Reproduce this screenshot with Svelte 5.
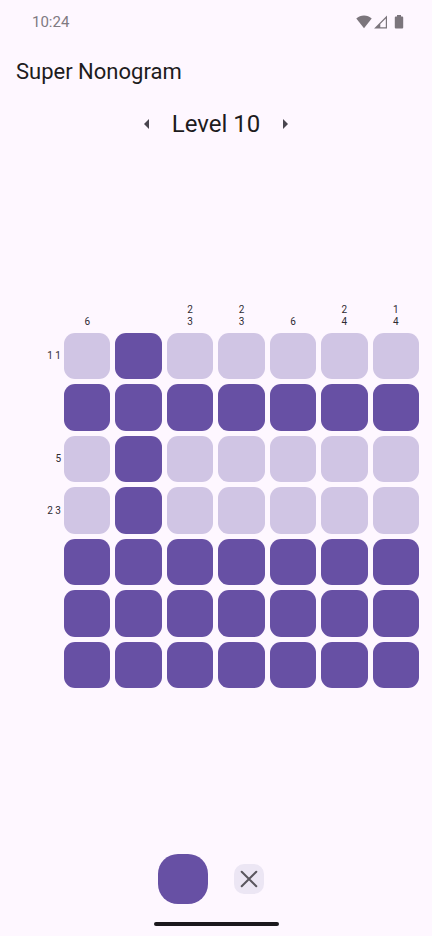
<script>
  const columnClues = [[6], [], [2, 3], [2, 3], [6], [2, 4], [1, 4]];
  const rowClues = [[1, 1], [], [5], [2, 3], [], [], []];

  let level = $state(10);
  let tool = $state('fill');
  let cells = $state([
    [0, 1, 0, 0, 0, 0, 0],
    [1, 1, 1, 1, 1, 1, 1],
    [0, 1, 0, 0, 0, 0, 0],
    [0, 1, 0, 0, 0, 0, 0],
    [1, 1, 1, 1, 1, 1, 1],
    [1, 1, 1, 1, 1, 1, 1],
    [1, 1, 1, 1, 1, 1, 1]
  ]);

  function paint(r, c) {
    cells[r][c] = tool === 'fill' ? 1 - cells[r][c] : 0;
  }
</script>

<div class="screen">
  <div class="status">
    <span>10:24</span>
    <div class="indicators">
      <svg width="16" height="14" viewBox="0 0 16 14" aria-hidden="true">
        <path d="M8 13.3 0.3 3.6C2.4 1.6 5.1 0.6 8 0.6s5.6 1 7.7 3z" />
      </svg>
      <svg width="14" height="14" viewBox="0 0 14 14" aria-hidden="true">
        <path fill-rule="evenodd" d="M13 0.6v12.9H0.1zM11.8 3.6 6.3 9.1v3.2h5.5z" />
      </svg>
      <svg class="battery" width="10" height="14" viewBox="0 0 10 14" aria-hidden="true">
        <path d="M3 0h4v1.4h1.2a1 1 0 0 1 1 1v10a1 1 0 0 1-1 1H1.8a1 1 0 0 1-1-1v-10a1 1 0 0 1 1-1H3z" />
      </svg>
    </div>
  </div>

  <header><h1>Super Nonogram</h1></header>

  <nav class="levels">
    <button class="arrow" aria-label="Previous level" onclick={() => (level -= 1)}>
      <svg width="24" height="24" viewBox="0 0 24 24"><path d="M14 7l-5 5 5 5z" /></svg>
    </button>
    <h2>Level {level}</h2>
    <button class="arrow" aria-label="Next level" onclick={() => (level += 1)}>
      <svg width="24" height="24" viewBox="0 0 24 24"><path d="M10 17l5-5-5-5z" /></svg>
    </button>
  </nav>

  <main>
    <div class="board">
      <div class="column-clues">
        {#each columnClues as clue}
          <div class="column-clue">
            {#each clue as n}<span>{n}</span>{/each}
          </div>
        {/each}
      </div>
      <div class="row-clues">
        {#each rowClues as clue}
          <div class="row-clue">{clue.join(' ')}</div>
        {/each}
      </div>
      <div class="cells">
        {#each cells as row, r}
          {#each row as cell, c}
            <button
              class="cell"
              class:filled={cell === 1}
              aria-label="Row {r + 1}, column {c + 1}"
              aria-pressed={cell === 1}
              onclick={() => paint(r, c)}
            ></button>
          {/each}
        {/each}
      </div>
    </div>
  </main>

  <div class="tools">
    <div class="slot">
      <button
        class="tool fill"
        class:active={tool === 'fill'}
        aria-label="Fill"
        aria-pressed={tool === 'fill'}
        onclick={() => (tool = 'fill')}
      ></button>
    </div>
    <div class="slot">
      <button
        class="tool cross"
        class:active={tool === 'cross'}
        aria-label="Cross out"
        aria-pressed={tool === 'cross'}
        onclick={() => (tool = 'cross')}
      >
        <svg viewBox="0 0 30 30"><path d="M7.7 7.7 22.3 22.3M22.3 7.7 7.7 22.3" /></svg>
      </button>
    </div>
  </div>

  <div class="home"><div class="handle"></div></div>
</div>

<style>
  :global(body) {
    margin: 0;
    background: #fef7ff;
  }

  .screen {
    display: flex;
    flex-direction: column;
    min-height: 100vh;
    background: #fef7ff;
    color: #1d1b20;
    font-family: Roboto, sans-serif;
  }

  button {
    border: 0;
    padding: 0;
    cursor: pointer;
  }

  .status {
    display: flex;
    align-items: center;
    justify-content: space-between;
    height: 44px;
    padding: 0 28px 0 32px;
    font-size: 15px;
    color: #7f7a82;
  }

  .indicators {
    display: flex;
    align-items: center;
    gap: 2px;
    fill: #7b757c;
  }

  .indicators svg {
    display: block;
  }

  .battery {
    margin-left: 4px;
  }

  header {
    display: flex;
    align-items: center;
    height: 56px;
    padding: 0 16px;
  }

  h1,
  h2 {
    margin: 0;
    font-weight: 400;
  }

  h1 {
    font-size: 22px;
    line-height: 28px;
  }

  h2 {
    font-size: 24px;
    line-height: 32px;
  }

  .levels {
    display: flex;
    align-items: center;
    justify-content: center;
    gap: 1px;
    height: 48px;
  }

  .arrow {
    display: grid;
    place-items: center;
    width: 48px;
    height: 48px;
    border-radius: 24px;
    background: transparent;
    fill: #49454f;
  }

  main {
    flex: 1;
    display: flex;
    align-items: center;
    padding: 0 13px;
  }

  .board {
    flex: 1;
    display: grid;
    grid-template-columns: 51px 1fr;
    font-size: 10px;
    line-height: 12px;
    color: #2e2b32;
  }

  .column-clues,
  .cells {
    display: grid;
    grid-template-columns: repeat(7, 1fr);
    gap: 5px;
  }

  .column-clues {
    grid-column: 2;
    padding-bottom: 5px;
  }

  .column-clue {
    display: flex;
    flex-direction: column;
    align-items: center;
    justify-content: flex-end;
  }

  .row-clues {
    display: grid;
    grid-template-rows: repeat(7, 1fr);
    gap: 5px;
    padding-right: 3px;
  }

  .row-clue {
    display: flex;
    align-items: center;
    justify-content: flex-end;
  }

  .cell {
    aspect-ratio: 1;
    border-radius: 11px;
    background: #d0c5e4;
  }

  .cell.filled {
    background: #6750a4;
  }

  .tools {
    display: flex;
    justify-content: center;
    gap: 16px;
    padding-top: 10px;
  }

  .slot {
    display: grid;
    place-items: center;
    width: 50px;
    height: 50px;
  }

  .tool {
    width: 30px;
    height: 30px;
    border-radius: 10px;
  }

  .tool.active {
    width: 50px;
    height: 50px;
    border-radius: 20px;
  }

  .fill {
    background: #6750a4;
  }

  .cross {
    background: #ece6f4;
  }

  .cross svg {
    display: block;
    width: 100%;
    fill: none;
    stroke: #5a565e;
    stroke-width: 2;
    stroke-linecap: round;
  }

  .home {
    display: flex;
    justify-content: center;
    height: 14px;
    padding-top: 18px;
  }

  .handle {
    width: 125px;
    height: 4px;
    border-radius: 2px;
    background: #1b181d;
  }
</style>
